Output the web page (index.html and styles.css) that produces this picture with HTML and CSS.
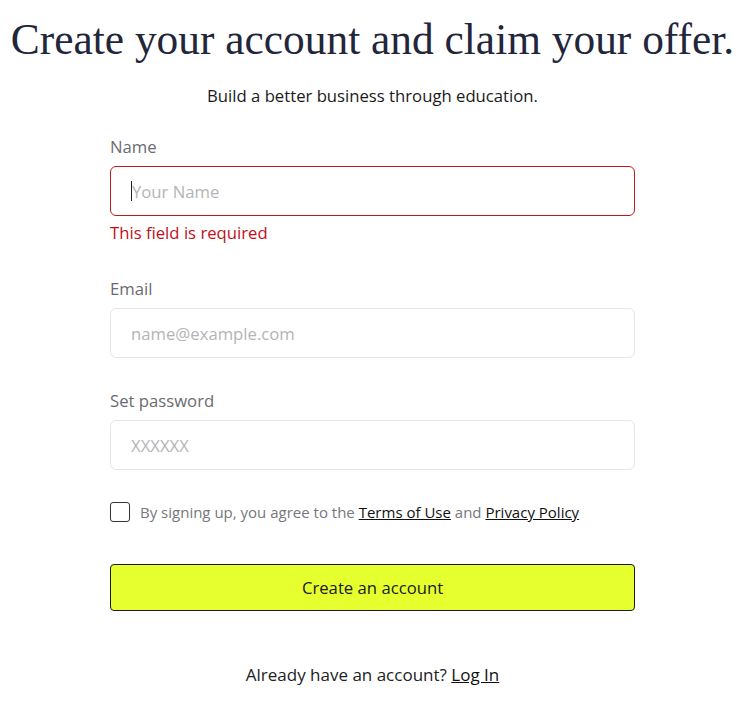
FILE: index.html
```html
<!DOCTYPE html>
<html lang="en">
<head>
<meta charset="utf-8">
<title>Create your account</title>
<link rel="stylesheet" href="styles.css">
</head>
<body>
<main class="page">
  <h1 class="title">Create your account and claim your offer.</h1>
  <p class="subtitle">Build a better business through education.</p>
  <form class="form">
    <div class="field">
      <label class="label" for="name">Name</label>
      <div class="input input-error"><span class="caret"></span><span class="ph">Your Name</span></div>
      <div class="error">This field is required</div>
    </div>
    <div class="field field-gap-lg">
      <label class="label" for="email">Email</label>
      <div class="input"><span class="ph">name@example.com</span></div>
    </div>
    <div class="field field-gap">
      <label class="label" for="pw">Set password</label>
      <div class="input"><span class="ph">XXXXXX</span></div>
    </div>
    <div class="agree">
      <span class="checkbox"></span>
      <span class="agree-text">By signing up, you agree to the <a href="#" class="link">Terms of Use</a> and <a href="#" class="link">Privacy Policy</a></span>
    </div>
    <button type="button" class="btn">Create an account</button>
  </form>
  <p class="login">Already have an account? <a href="#" class="link">Log In</a></p>
</main>
</body>
</html>
```
FILE: styles.css
```css
* { box-sizing: border-box; }
html, body { margin: 0; padding: 0; background: #fff; }
body { font-family: "Open Sans", "Noto Sans", sans-serif; color: #1a1a1a; }
.page {
  width: 745px;
  display: flex;
  flex-direction: column;
  align-items: center;
}
.title {
  margin: 13px 0 0;
  font-family: "Liberation Serif", serif;
  font-weight: 400;
  font-size: 43.4px;
  line-height: 52px;
  color: #23263a;
  white-space: nowrap;
}
.subtitle {
  margin: 19px 0 0;
  font-size: 16.7px;
  line-height: 24px;
}
.form {
  width: 525px;
  display: flex;
  flex-direction: column;
  margin-top: 27px;
}
.field { display: flex; flex-direction: column; }
.field-gap-lg { margin-top: 32px; }
.field-gap { margin-top: 31px; }
.label {
  font-size: 16.7px;
  line-height: 24px;
  color: #6b6b72;
  margin-bottom: 7px;
}
.input {
  height: 50px;
  border: 1px solid #e6e6e9;
  border-radius: 6px;
  display: flex;
  align-items: center;
  padding-left: 20px;
  font-size: 16.7px;
}
.input-error { border-color: #b91c1c; }
.caret { width: 1px; height: 20px; background: #222; }
.ph { color: #b4b4b8; }
.error { color: #c0101a; font-size: 16.7px; line-height: 24px; margin-top: 5px; }
.agree { display: flex; align-items: center; gap: 10px; margin-top: 32px; height: 20px; }
.checkbox {
  width: 20px; height: 20px;
  border: 1.5px solid #333;
  border-radius: 3px;
  flex: none;
}
.agree-text { font-size: 15px; color: #77777d; white-space: nowrap; }
.link { color: #111; text-decoration: underline; }
.btn {
  margin-top: 42px;
  height: 47px;
  background: #e6ff2e;
  border: 1px solid #1a1a1a;
  border-radius: 4px;
  font-family: inherit;
  font-size: 16.7px;
  color: #1a1a1a;
}
.login { margin: 52px 0 0; font-size: 17px; line-height: 24px; color: #222; }
```
